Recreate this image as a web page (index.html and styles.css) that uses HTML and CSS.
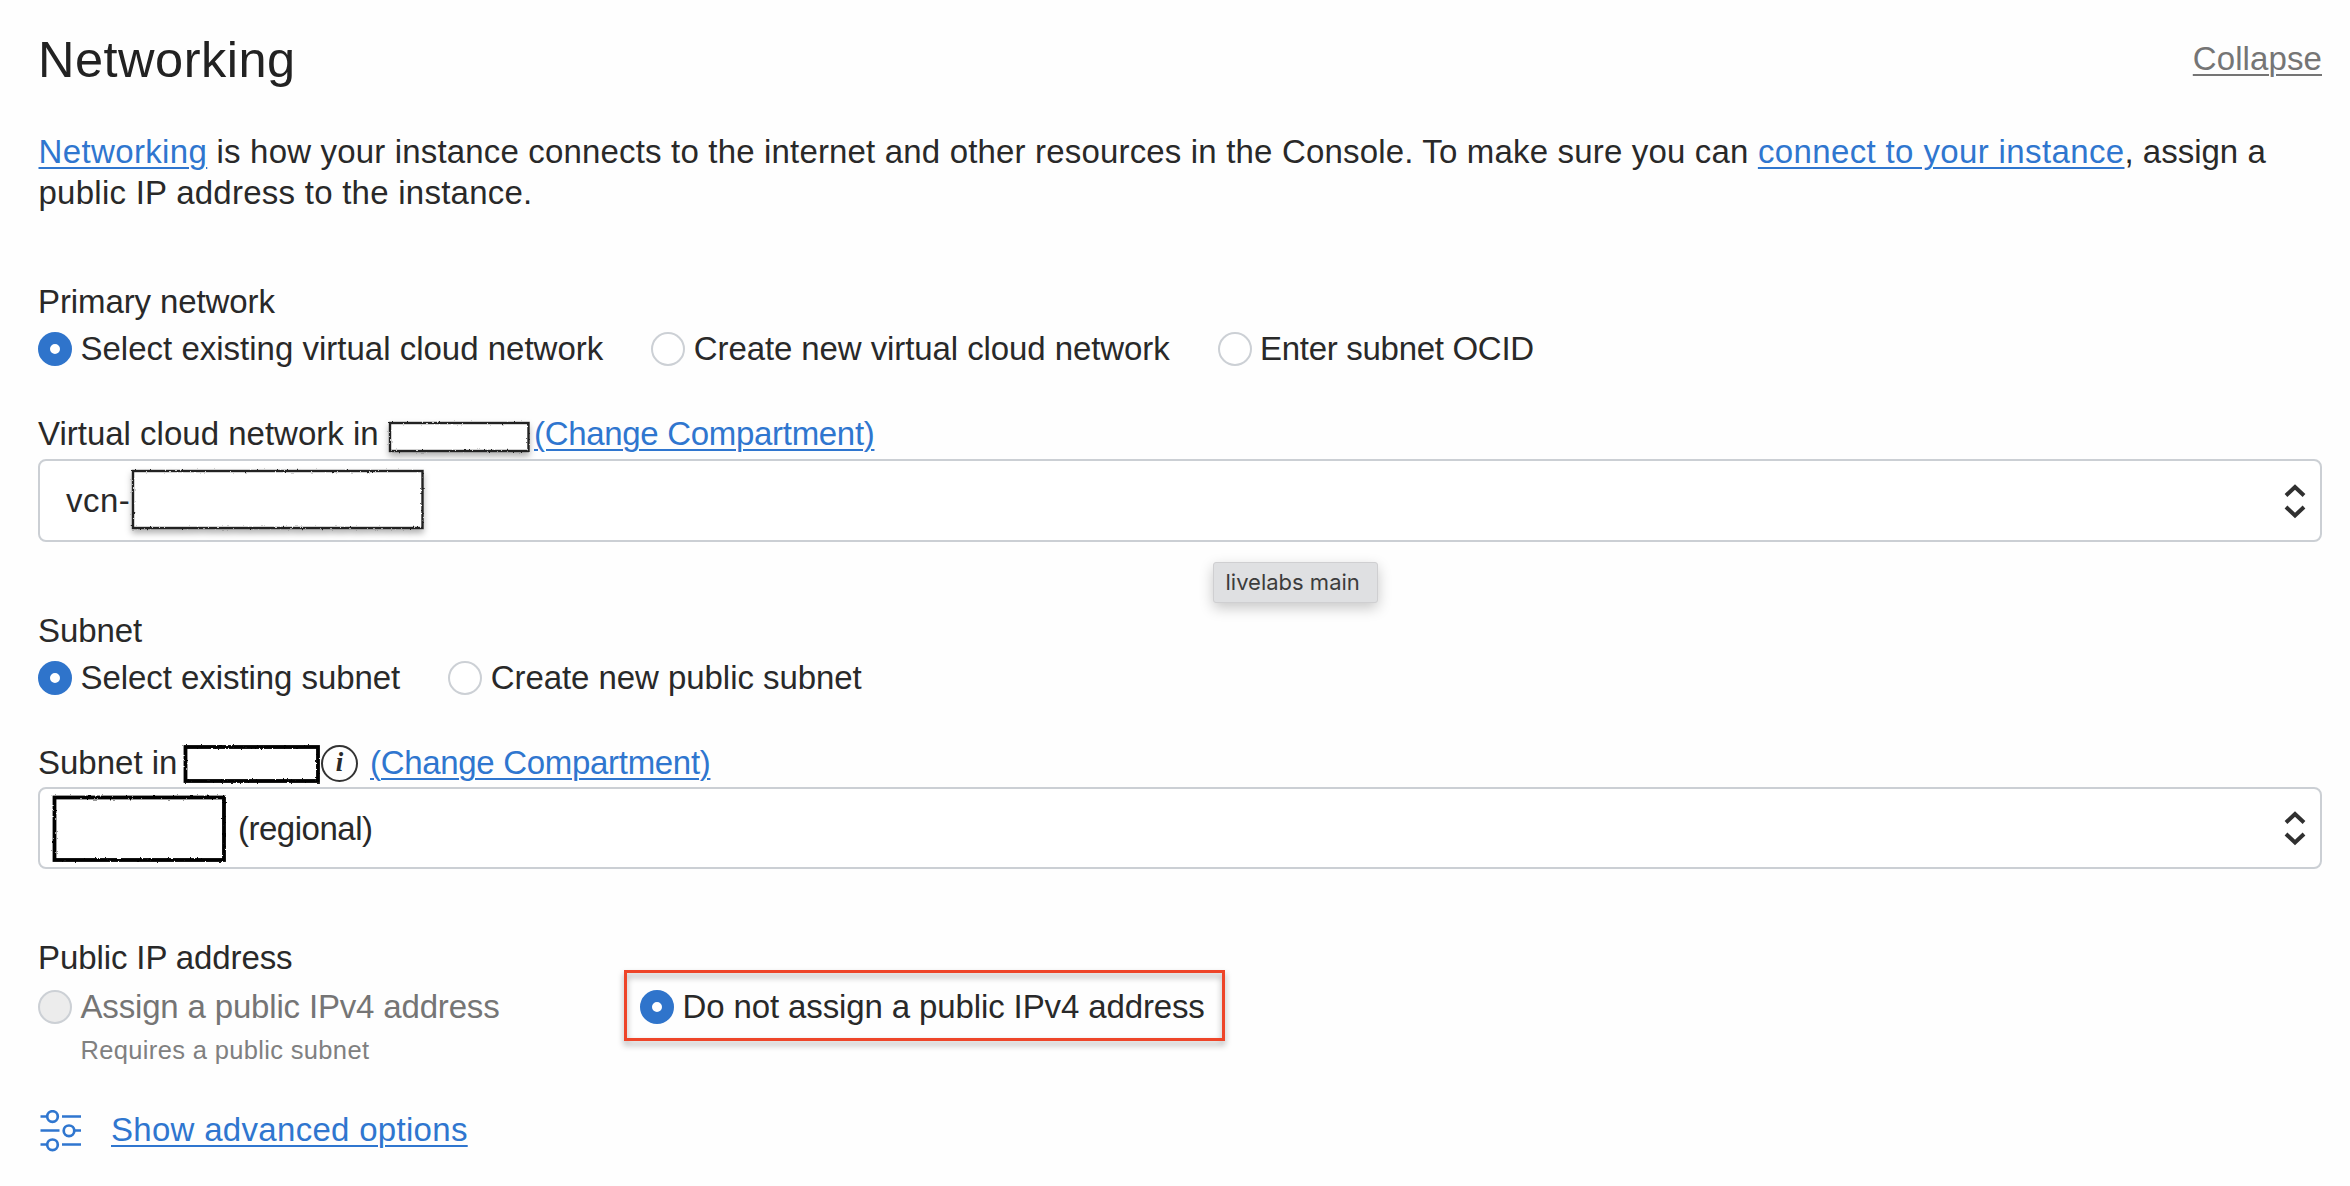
FILE: index.html
```html
<!DOCTYPE html>
<html lang="en">
<head>
<meta charset="utf-8">
<title>Networking</title>
<link rel="stylesheet" href="styles.css">
</head>
<body>
<svg class="defs" width="0" height="0" aria-hidden="true">
  <filter id="rough" x="-5%" y="-10%" width="110%" height="120%">
    <feTurbulence type="fractalNoise" baseFrequency="0.4" numOctaves="2" seed="4" result="n"/>
    <feDisplacementMap in="SourceGraphic" in2="n" scale="2.4" xChannelSelector="R" yChannelSelector="G"/>
  </filter>
</svg>
<main class="panel">
  <header class="header">
    <h1 class="title">Networking</h1>
    <a class="link collapse">Collapse</a>
  </header>

  <p class="intro"><a class="link intro-link">Networking</a> is how your instance connects to the internet and other resources in the Console. To make sure you can <a class="link intro-link">connect to your instance</a><span class="plain">, assign a</span><br><span class="second">public IP address to the instance.</span></p>

  <section class="group">
    <div class="label">Primary network</div>
    <div class="options">
      <label class="option"><span class="radio on"></span><span>Select existing virtual cloud network</span></label>
      <label class="option"><span class="radio"></span><span class="t-create">Create new virtual cloud network</span></label>
      <label class="option"><span class="radio"></span><span class="t-ocid">Enter subnet OCID</span></label>
    </div>
    <div class="field-label">
      <span class="vcn-label">Virtual cloud network in</span>
      <svg class="mask" width="142" height="32"><rect class="thin" x="1" y="1" width="138.500" height="28"/></svg>
      <a class="link change first">(Change Compartment)</a>
    </div>
    <div class="select">
      <span class="vcn">vcn-</span>
      <svg class="mask vcn-mask" width="293" height="61"><rect class="thin" x="1" y="1" width="289.500" height="57"/></svg>
      <svg class="chevrons" width="22" height="38" viewBox="0 0 22 38"><path d="M2 13.500 11 5 20 13.500M2 25 11 33.500 20 25"/></svg>
      <div class="tooltip">livelabs main</div>
    </div>
  </section>

  <section class="group">
    <div class="label">Subnet</div>
    <div class="options">
      <label class="option"><span class="radio on"></span><span class="t-sub">Select existing subnet</span></label>
      <label class="option"><span class="radio"></span><span class="t-sub">Create new public subnet</span></label>
    </div>
    <div class="field-label">
      <span class="subnet-label">Subnet in</span>
      <svg class="mask bold" width="138" height="41"><rect class="thick" x="2.500" y="2" width="132.500" height="34"/></svg>
      <span class="info">i</span>
      <a class="link change">(Change Compartment)</a>
    </div>
    <div class="select short">
      <svg class="mask bold region-mask" width="177" height="69"><rect class="thick" x="2.500" y="2.500" width="169.500" height="62.500"/></svg>
      <span class="regional">(regional)</span>
      <svg class="chevrons" width="22" height="38" viewBox="0 0 22 38"><path d="M2 13.500 11 5 20 13.500M2 25 11 33.500 20 25"/></svg>
    </div>
  </section>

  <section class="group">
    <div class="label">Public IP address</div>
    <div class="options ip">
      <label class="option disabled"><span class="radio"></span><span class="t-assign">Assign a public IPv4 address</span></label>
      <label class="option marked"><span class="radio on"></span><span class="t-not">Do not assign a public IPv4 address</span></label>
    </div>
    <div class="hint">Requires a public subnet</div>
  </section>

  <div class="advanced">
    <svg class="sliders" width="42" height="42" viewBox="0 0 42 42">
      <path d="M0.500 6.500H7M22 6.500H41M0.500 20.500H19.500M35 20.500H41M0.500 34.500H7M22 34.500H41"/>
      <circle cx="12.500" cy="6.500" r="5.300"/><circle cx="29" cy="20.800" r="5.300"/><circle cx="12.500" cy="34.800" r="5.300"/>
    </svg>
    <a class="link show">Show advanced options</a>
  </div>
</main>
</body>
</html>
```
FILE: styles.css
```css
*, *::after { box-sizing: border-box; }

body {
  margin: 0;
  background: #fefefe;
  color: #292929;
  font-family: "Liberation Sans", Arial, sans-serif;
  font-size: 33px;
}

.defs { position: absolute; }

.panel {
  display: flex;
  flex-direction: column;
  height: 1186px;
  padding: 29px 28px 0 38px;
}

.header {
  display: flex;
  justify-content: space-between;
  height: 60px;
  line-height: 60px;
}

.title {
  margin: 0;
  font-size: 50.5px;
  font-weight: 400;
  line-height: 62px;
  letter-spacing: 0.5px;
  color: #222;
}

.link {
  color: #2f76cf;
  text-decoration: underline;
  text-decoration-thickness: 2px;
  text-underline-offset: 4px;
}

.collapse { color: #757575; letter-spacing: 0.1px; }

.intro {
  margin: 41.5px 0 0;
  padding-left: 0.5px;
  line-height: 41.5px;
  letter-spacing: 0.17px;
  white-space: nowrap;
}
.intro-link { letter-spacing: 0.37px; }
.plain { letter-spacing: 0; }
.second { letter-spacing: 0.25px; }

.group { display: flex; flex-direction: column; }

.label {
  height: 40px;
  margin-top: 69px;
  line-height: 40px;
  letter-spacing: -0.1px;
}
.intro + .group .label { margin-top: 68.5px; }

.options {
  display: flex;
  gap: 48px;
  height: 34px;
  margin-top: 10px;
  line-height: 34px;
  white-space: nowrap;
}

.option {
  position: relative;
  display: flex;
  gap: 8.5px;
}

.radio {
  width: 34px;
  height: 34px;
  flex: none;
  border: 2px solid #ccd0d5;
  border-radius: 50%;
  background: #fff;
}
.radio.on { border: 12px solid #2f74cb; }

.t-create { letter-spacing: -0.09px; }
.t-ocid { letter-spacing: -0.3px; }
.t-sub { letter-spacing: -0.06px; }
.t-assign { letter-spacing: -0.17px; }
.t-not { letter-spacing: -0.12px; }

.field-label {
  display: flex;
  height: 40px;
  margin-top: 48px;
  line-height: 40px;
  white-space: nowrap;
}
.vcn-label { width: 351px; }
.subnet-label { width: 145px; }

.mask { flex: none; overflow: visible; margin-top: 8px; filter: drop-shadow(0 4px 3px rgba(0, 0, 0, 0.3)); }
.mask rect { fill: #fff; filter: url(#rough); }
.thin { stroke: #222; stroke-width: 2.4; }
.thick { stroke: #000; stroke-width: 3.8; }
.mask.bold { margin-top: 2px; filter: none; }

.change { letter-spacing: -0.31px; }
.change.first { margin-left: 3px; }

.info {
  width: 37px;
  height: 37px;
  margin: 2px 12px 0 0;
  flex: none;
  border: 2.500px solid #333;
  border-radius: 50%;
  font: italic bold 27px/31px "Liberation Serif", serif;
  text-align: center;
}

.select {
  position: relative;
  display: flex;
  height: 83px;
  margin-top: 4.5px;
  border: 2px solid #cbcfd4;
  border-radius: 8px;
  background: #fff;
  line-height: 79px;
}
.select.short { height: 82px; line-height: 80px; }

.vcn { width: 92px; padding-left: 26px; letter-spacing: 0.5px; }
.vcn-mask { margin-top: 9px; }
.mask.region-mask { margin: 6px 0 0 12px; }
.regional { margin-left: 9px; letter-spacing: -0.49px; }

.chevrons {
  margin: 21px 14px 0 auto;
  fill: none;
  stroke: #303030;
  stroke-width: 4;
}
.short .chevrons { margin-top: 20px; }

.tooltip {
  position: absolute;
  top: 101px;
  left: 1172.5px;
  width: 165px;
  height: 41px;
  border: 1px solid #cfcfd1;
  border-radius: 3px;
  background: #dfe0e2;
  box-shadow: 0 5px 14px rgba(0, 0, 0, 0.22);
  color: #3c3c3c;
  font-family: Inter, sans-serif;
  font-size: 22px;
  line-height: 38px;
  padding-left: 12px;
}

.ip { gap: 140.5px; margin-top: 12px; }
.disabled { color: #757575; }
.disabled .radio { background: #ececec; }

.marked::after {
  content: "";
  position: absolute;
  top: -20px;
  left: -15.5px;
  width: 601px;
  height: 71px;
  border: 3px solid #ee4529;
  filter: drop-shadow(0 4px 3px rgba(0, 0, 0, 0.35));
}

.hint {
  height: 30px;
  margin: 11px 0 0 42.5px;
  color: #808080;
  font-size: 25.5px;
  line-height: 30px;
  letter-spacing: 0.34px;
}

.advanced {
  display: flex;
  height: 42px;
  margin-top: 44.500px;
  line-height: 40px;
}
.sliders { margin-left: 2px; fill: none; stroke: #2f76cf; stroke-width: 2.700; }
.show { margin-left: 29px; letter-spacing: 0.3px; }
```
